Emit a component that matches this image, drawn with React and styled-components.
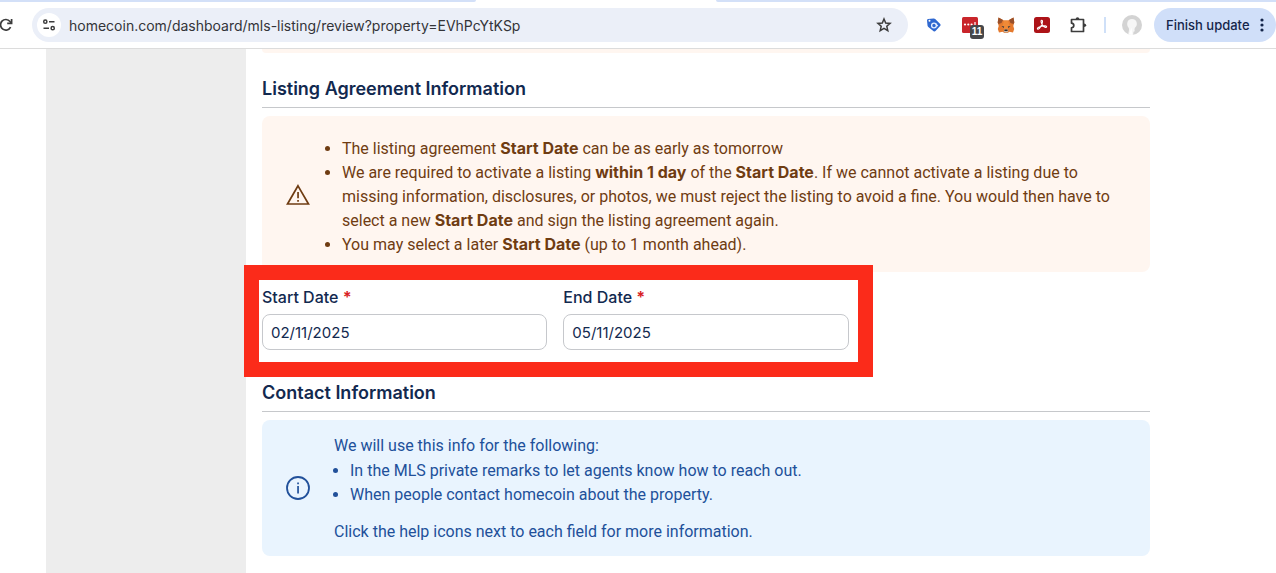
import React, { useState } from 'react';
import styled, { createGlobalStyle } from 'styled-components';

const GlobalStyle = createGlobalStyle`
    * {
        box-sizing: border-box;
    }

    html, body, #root {
        height: 100%;
    }

    body {
        margin: 0;
        overflow: hidden;
        background: #fff;
        color: #12294f;
        font-family: Inter, "Liberation Sans", sans-serif;
        font-size: 16px;
        line-height: 24px;
    }
`

const Window = styled.div`
    height: 100%;
    display: flex;
    flex-direction: column;
`

const TabStrip = styled.div`
    flex: none;
    height: 2px;
    display: flex;
    justify-content: space-between;
`

const TabEdge = styled.div`
    flex: ${props => props.$grow} 1 0;
    background: #d3e0f8;
    border-radius: ${props => props.$right ? '0 0 0 6px' : '0 0 6px 0'};
`

const ActiveTab = styled.div`
    flex: 240 1 0;
`

const Toolbar = styled.header`
    flex: none;
    height: 47px;
    display: flex;
    align-items: center;
    border-bottom: 1px solid #dcdcdc;
`

const IconButton = styled.button`
    flex: none;
    display: flex;
    align-items: center;
    justify-content: center;
    width: 36px;
    height: 34px;
    padding: 0;
    border: none;
    background: none;
    color: #3c3c3c;
`

const ReloadButton = styled(IconButton)`
    width: 32px;
    justify-content: flex-start;
`

const AddressBar = styled.div`
    flex: 1;
    display: flex;
    align-items: center;
    height: 34px;
    padding-left: 5px;
    border-radius: 17px;
    background: #ebeff8;
`

const SiteButton = styled(IconButton)`
    width: 24px;
    height: 24px;
    border-radius: 12px;
    background: #fff;
`

const AddressInput = styled.input`
    flex: 1;
    min-width: 0;
    height: 30px;
    padding: 0 8px;
    border: none;
    outline: none;
    background: none;
    color: #333438;
    font-family: inherit;
    font-size: 14px;
`

const StarButton = styled(IconButton)`
    width: 48px;
`

const Extensions = styled.div`
    flex: none;
    display: flex;
    align-items: center;
    padding-left: 8px;
`

const BadgeHolder = styled.span`
    position: relative;
    display: flex;
`

const Badge = styled.span`
    position: absolute;
    left: 8px;
    top: 8px;
    width: 14px;
    height: 14px;
    border-radius: 3px;
    background: #46474a;
    color: #fff;
    font-size: 10px;
    font-weight: 700;
    line-height: 14px;
    text-align: center;
`

const Divider = styled.span`
    width: 2px;
    height: 16px;
    margin: 0 8px;
    background: #cfe0f8;
`

const UpdateButton = styled.button`
    flex: none;
    display: flex;
    align-items: center;
    justify-content: space-between;
    width: 122px;
    height: 34px;
    margin-left: 4px;
    padding: 0 12px;
    border: none;
    border-radius: 17px;
    background: #d0dff9;
    color: #14254a;
    font-family: inherit;
    font-size: 13px;
    font-weight: 500;
    white-space: nowrap;
`

const Page = styled.div`
    flex: 1;
    min-height: 0;
    overflow: hidden;
    display: flex;
    padding: 0 110px 0 46px;
`

const Sidebar = styled.aside`
    flex: none;
    width: 200px;
    background: #ededed;
`

const Main = styled.main`
    flex: 1;
    min-width: 0;
    margin: 0 16px;
`

const PreviousAlert = styled.div`
    height: 4px;
    border-radius: 0 0 8px 8px;
    background: #fff6f0;
`

const SectionTitle = styled.h2`
    margin: ${props => props.$top}px 0 8px;
    padding-bottom: 4px;
    border-bottom: 1px solid #c6c8cb;
    font-size: 18px;
    font-weight: 600;
    line-height: 28px;
`

const Alert = styled.div`
    display: flex;
    align-items: center;
    gap: 24px;
    padding: ${props => props.$warning ? '16px 24px 15px' : '12px 24px'};
    border-radius: 8px;
    background: ${props => props.$warning ? '#fff6f0' : '#e9f4fe'};
    color: ${props => props.$warning ? '#6f3c12' : '#21509a'};
    font-family: Roboto, "Liberation Sans", sans-serif;

    svg {
        flex: none;
    }
`

const AlertText = styled.div`
    flex: 1;
    min-width: 0;
    padding-top: 2px;
`

const WarningList = styled.ul`
    margin: 3px 0 0;
    padding-left: 8px;
`

const Strong = styled.strong`
    font-family: Inter, "Liberation Sans", sans-serif;
    font-weight: 700;
    line-height: 16px;
`

const InfoList = styled.ul`
    margin: 1px 0 13px;
    padding-left: 16px;
`

const Paragraph = styled.p`
    margin: 0;
`

const FormGrid = styled.div`
    display: grid;
    grid-template-columns: repeat(3, 1fr);
    gap: 16px;
    margin-top: 13px;
`

const DateRange = styled.div`
    position: relative;
    grid-column: span 2;
    display: grid;
    grid-template-columns: 1fr 1fr;
    gap: 16px;
`

const Highlight = styled.div`
    position: absolute;
    top: -20px;
    right: -24px;
    bottom: -27px;
    left: -18px;
    border: 15px solid #fb2b1a;
    pointer-events: none;
`

const Field = styled.div`
    display: flex;
    flex-direction: column;
    gap: 5px;
`

const Label = styled.label`
    font-weight: 500;
`

const Required = styled.span`
    color: #d81f26;
    font-weight: 700;
`

const FieldInput = styled.input`
    width: 100%;
    height: 36px;
    padding: 0 8px;
    border: 1px solid #c6c8cc;
    border-radius: 8px;
    outline: none;
    background: #fff;
    color: #12294f;
    font-family: inherit;
    font-size: 15px;
`

const ReloadIcon = () => (
    <svg width="13" height="14" viewBox="0 0 13 14" fill="none" stroke="currentColor" strokeWidth="1.7">
        <path d="M10.6 9.2A5.3 5.3 0 1 1 10 3.5L11.3 5" />
        <path d="M11.6 1v4.4H7.2" />
    </svg>
)

const TuneIcon = () => (
    <svg width="14" height="14" viewBox="0 0 14 14" fill="none" stroke="#3c3c3c" strokeWidth="1.5">
        <circle cx="3.3" cy="3.7" r="1.6" />
        <path d="M7 3.7h5.5M1.5 10.2H7" />
        <circle cx="10.7" cy="10.2" r="1.6" />
    </svg>
)

const StarIcon = () => (
    <svg width="16" height="16" viewBox="0 0 16 16" fill="none" stroke="currentColor" strokeWidth="1.5">
        <path d="M8 2l1.7 4 4.4.4-3.3 2.9 1 4.3L8 11.3l-3.8 2.3 1-4.3-3.3-2.9 4.4-.4z" />
    </svg>
)

const TagIcon = () => (
    <svg width="16" height="16" viewBox="0 0 16 16">
        <path d="M2 2l5.500-.5q1-.2 1.700.5l5 5q.9.9.1 1.800l-4.800 5.300q-.9.9-1.900.1L2.300 10q-.7-.6-.8-1.500L1 3.300Q1 2.200 2 2z" fill="#2f68d0" />
        <circle cx="3.500" cy="3.800" r="1" fill="#fff" />
        <circle cx="8" cy="8.500" r="2.400" fill="none" stroke="#e3edff" strokeWidth="1.300" />
        <path d="M9.600 6.600l2.200 2.600" stroke="#e3edff" strokeWidth="1.200" />
    </svg>
)

const PasswordIcon = () => (
    <svg width="16" height="16" viewBox="0 0 16 16">
        <rect width="16" height="16" rx="1.500" fill="#c9252b" />
        <circle cx="3" cy="7.500" r="1.100" fill="#fff" />
        <circle cx="6.300" cy="7.500" r="1.100" fill="#fff" />
        <circle cx="9.600" cy="7.500" r="1.100" fill="#fff" />
        <path d="M13 5v5" stroke="#fff" strokeWidth="1.200" />
    </svg>
)

const FoxIcon = () => (
    <svg width="18" height="16" viewBox="0 0 18 16">
        <path d="M1.500.500L7 3.500h4L16.500.500l.8 5-1 3.500.9 3-1.200 3.500-3.500-.8-2 1.300h-3l-2-1.300-3.500.8L.8 12l.9-3L.7 5.500z" fill="#e57a2e" />
        <path d="M1.500.500L6 3 4.500 6 1.500 7 .7 5.500zM16.500.500L12 3l1.500 3 3 1 .8-1.500z" fill="#98502b" />
        <path d="M7 3.500h4l1.500 5L10.500 13h-3l-2-4.500z" fill="#f08a37" />
        <path d="M4.500 9l2.700.6-.5 1.400zM13.500 9l-2.700.6.5 1.400z" fill="#2d3540" />
        <path d="M7.300 12.500h3.400l.7 1.800-.9 1.200h-3l-.9-1.200z" fill="#c8b6a8" />
        <path d="M7.600 12.600h2.800l.3 1.500H7.300z" fill="#272c33" />
    </svg>
)

const PdfIcon = () => (
    <svg width="16" height="16" viewBox="0 0 16 16">
        <rect width="16" height="16" rx="2.500" fill="#ad1318" />
        <path d="M7.700 3.200c1.300 0 .9 2.600-.3 5.100-1.100 2.400-2.900 4.400-3.800 3.800-1-.7 1.500-2.400 4.200-3 2.600-.6 5-.4 4.800.7-.2 1.200-2.700.2-4-1.500-1.300-1.600-2.200-5.100-.9-5.100z" fill="none" stroke="#fff" strokeWidth="1.100" />
    </svg>
)

const PuzzleIcon = () => (
    <svg width="18" height="18" viewBox="0 0 18 18" fill="none" stroke="currentColor" strokeWidth="1.700" strokeLinejoin="round">
        <path d="M2.500 3.500h12v12h-12v-3.700q2.300-.2 2.300-2.300T2.500 7.200z" />
        <path d="M6.600 3.200Q6.700 1.300 8.500 1.300t1.900 1.900z" fill="currentColor" stroke="none" />
        <path d="M15 7.500q2.200 0 2.200 1.800T15 11.100z" fill="currentColor" stroke="none" />
    </svg>
)

const AvatarIcon = () => (
    <svg width="20" height="20" viewBox="0 0 20 20">
        <circle cx="10" cy="10" r="10" fill="#d3d3d3" />
        <path d="M6.300 19.300c.2-2.800 1.200-4 .5-6.300C5.300 11.300 5 9.800 5.300 7.800 5.700 5.200 7.500 4 10 4s4.500 1.400 4.800 4c.2 2-.3 3.600-1.900 4.700-.6 1.400-.3 2.500-.2 3.600l-1.200.4-.4 3.200z" fill="#f6f6f6" />
        <path d="M9.500 12.500l1 7.400-3.600-.5z" fill="#fff" />
    </svg>
)

const DotsIcon = () => (
    <svg width="4" height="14" viewBox="0 0 4 14" fill="currentColor">
        <circle cx="2" cy="2" r="1.600" />
        <circle cx="2" cy="7" r="1.600" />
        <circle cx="2" cy="12" r="1.600" />
    </svg>
)

const WarningIcon = () => (
    <svg width="24" height="24" viewBox="0 0 24 24">
        <path d="M12 2.800L22.500 21h-21z" fill="none" stroke="currentColor" strokeWidth="1.700" />
        <path d="M11.200 9h1.700v6.200h-1.700zM11.200 17h1.700v1.800h-1.700z" fill="currentColor" />
    </svg>
)

const InfoIcon = () => (
    <svg width="24" height="24" viewBox="0 0 24 24">
        <circle cx="12" cy="12" r="11" fill="none" stroke="currentColor" strokeWidth="1.800" />
        <path d="M11.200 6.500h1.700v1.800h-1.700zM11.200 10h1.700v7.500h-1.700z" fill="currentColor" />
    </svg>
)

function DateField({ id, label, initial }) {
    const [value, setValue] = useState(initial);

    return (
        <Field>
            <Label htmlFor={id}>{label} <Required>*</Required></Label>
            <FieldInput id={id} value={value} onChange={e => setValue(e.target.value)} />
        </Field>
    );
}

function BrowserBar() {
    return (
        <>
            <TabStrip>
                <TabEdge $grow={476} />
                <ActiveTab />
                <TabEdge $grow={560} $right />
            </TabStrip>
            <Toolbar>
                <ReloadButton aria-label="Reload"><ReloadIcon /></ReloadButton>
                <AddressBar>
                    <SiteButton aria-label="Site information"><TuneIcon /></SiteButton>
                    <AddressInput
                        aria-label="Address"
                        defaultValue="homecoin.com/dashboard/mls-listing/review?property=EVhPcYtKSp"
                    />
                    <StarButton aria-label="Bookmark"><StarIcon /></StarButton>
                </AddressBar>
                <Extensions>
                    <IconButton aria-label="Tag"><TagIcon /></IconButton>
                    <IconButton aria-label="Passwords">
                        <BadgeHolder>
                            <PasswordIcon />
                            <Badge>11</Badge>
                        </BadgeHolder>
                    </IconButton>
                    <IconButton aria-label="Wallet"><FoxIcon /></IconButton>
                    <IconButton aria-label="PDF"><PdfIcon /></IconButton>
                    <IconButton aria-label="Extensions"><PuzzleIcon /></IconButton>
                    <Divider />
                    <IconButton aria-label="Profile"><AvatarIcon /></IconButton>
                </Extensions>
                <UpdateButton>
                    Finish update
                    <DotsIcon />
                </UpdateButton>
            </Toolbar>
        </>
    );
}

export default function App() {
    return (
        <Window>
            <GlobalStyle />
            <BrowserBar />
            <Page>
                <Sidebar />
                <Main>
                    <PreviousAlert />
                    <SectionTitle $top={22}>Listing Agreement Information</SectionTitle>
                    <Alert $warning>
                        <WarningIcon />
                        <AlertText>
                            <WarningList>
                                <li>The listing agreement <Strong>Start Date</Strong> can be as early as tomorrow</li>
                                <li>
                                    We are required to activate a listing <Strong>within 1 day</Strong> of
                                    the <Strong>Start Date</Strong>. If we cannot activate a listing due to missing
                                    information, disclosures, or photos, we must reject the listing to avoid a fine. You
                                    would then have to select a new <Strong>Start Date</Strong> and sign the listing
                                    agreement again.
                                </li>
                                <li>You may select a later <Strong>Start Date</Strong> (up to 1 month ahead).</li>
                            </WarningList>
                        </AlertText>
                    </Alert>
                    <FormGrid>
                        <DateRange>
                            <DateField id="start-date" label="Start Date" initial="02/11/2025" />
                            <DateField id="end-date" label="End Date" initial="05/11/2025" />
                            <Highlight />
                        </DateRange>
                    </FormGrid>
                    <SectionTitle $top={29}>Contact Information</SectionTitle>
                    <Alert>
                        <InfoIcon />
                        <AlertText>
                            <Paragraph>We will use this info for the following:</Paragraph>
                            <InfoList>
                                <li>In the MLS private remarks to let agents know how to reach out.</li>
                                <li>When people contact homecoin about the property.</li>
                            </InfoList>
                            <Paragraph>Click the help icons next to each field for more information.</Paragraph>
                        </AlertText>
                    </Alert>
                </Main>
            </Page>
        </Window>
    );
}
